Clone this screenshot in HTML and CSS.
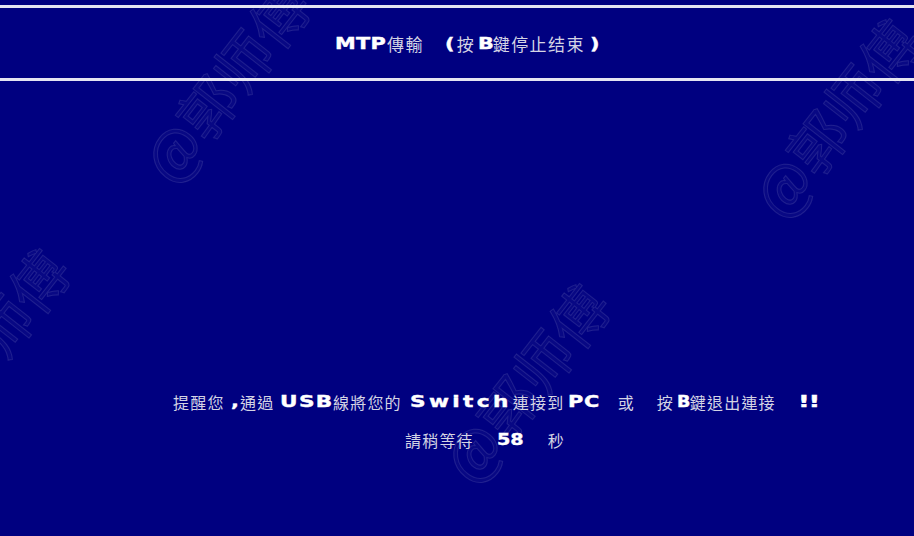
FILE: index.html
```html
<!DOCTYPE html>
<html lang="zh-Hant">
<head>
<meta charset="utf-8">
<title>MTP傳輸</title>
<link rel="stylesheet" href="styles.css">
</head>
<body>
<div class="screen">
  <header class="bar">
    <div class="title">
      <span class="en mtp">MTP</span><span class="cjk t1">傳輸</span><span class="en pl">(</span><span class="cjk t3">按</span><span class="en tb">B</span><span class="cjk t2">鍵停止结束</span><span class="en pr">)</span>
    </div>
  </header>
  <main class="body">
    <p class="line l1">
      <span class="cjk">提醒您</span><span class="en comma">,</span><span class="cjk tong">通過</span><span class="en usb">USB</span><span class="cjk">線將您的</span><span class="en sw">Switch</span><span class="cjk lian">連接到</span><span class="en pc">PC</span><span class="cjk or">或</span><span class="cjk press">按</span><span class="en lb">B</span><span class="cjk">鍵退出連接</span><span class="en bang">!!</span>
    </p>
    <p class="line l2">
      <span class="cjk">請稍等待</span><span class="en num">58</span><span class="cjk sec">秒</span>
    </p>
  </main>
  <div class="wm wm1">@郭师傅</div>
  <div class="wm wm2">@郭师傅</div>
  <div class="wm wm3">@郭师傅</div>
  <div class="wm wm4">@郭师傅</div>
</div>
</body>
</html>
```
FILE: styles.css
```css
html, body {
  margin: 0;
  padding: 0;
  background: #000080;
}
.screen {
  position: relative;
  width: 914px;
  height: 536px;
  overflow: hidden;
  background: #000080;
  font-family: "Noto Sans CJK TC", "Noto Sans CJK SC", sans-serif;
}
.bar {
  padding-top: 5px;
}
.title {
  height: 70px;
  border-top: 3px solid #e4e4f2;
  border-bottom: 3px solid #e4e4f2;
  display: flex;
  align-items: center;
  padding-left: 335px;
  font-size: 17px;
  white-space: pre;
}
.cjk {
  color: #d4d4e4;
  letter-spacing: 1.2px;
}
.title .cjk { letter-spacing: 1.4px; }
.en {
  display: inline-block;
  font-family: "DejaVu Sans", sans-serif;
  font-weight: bold;
  font-size: 16px;
  color: #ffffff;
  -webkit-text-stroke: 0.4px #ffffff;
  transform-origin: left center;
  transform: scaleX(1.3);
  white-space: pre;
}

/* title */
.mtp { width: 51px; letter-spacing: 0.2px; }
.t1 { margin-left: 1px; }
.pl { margin-left: 21px; width: 10px; }
.t3 { margin-left: 2px; }
.tb { margin-left: 2.6px; width: 15px; }
.pr { margin-left: 5px; width: 10px; }

/* body */
.body {
  padding-top: 311px;
  display: flex;
  flex-direction: column;
  gap: 18px;
}
.line {
  margin: 0;
  height: 20px;
  line-height: 20px;
  font-size: 16px;
  white-space: nowrap;
  display: flex;
  align-items: center;
}
.l1 { padding-left: 173px; }
.l2 { padding-left: 405px; }
.comma { margin-left: 6px; width: 9px; }
.tong { margin-left: 0.4px; }
.usb { margin-left: 5.6px; width: 53px; letter-spacing: 1px; transform: scaleX(1.35); }
.sw { margin-left: 8px; width: 102px; letter-spacing: 2.5px; transform: scaleX(1.35); }
.lian { margin-left: 1px; }
.pc { margin-left: 3.4px; width: 32px; letter-spacing: 0.5px; }
.or { margin-left: 18px; }
.press { margin-left: 21.8px; }
.lb { margin-left: 2.8px; width: 13px; transform: scaleX(1.1); }
.bang { margin-left: 22px; width: 18px; letter-spacing: -0.8px; transform: scaleX(1.6); }
.num { margin-left: 23px; width: 27px; transform: scaleX(1.2); }
.sec { margin-left: 24px; }

.wm {
  position: absolute;
  font-size: 58px;
  font-family: "Noto Sans CJK SC", sans-serif;
  color: rgba(255, 255, 255, 0.03);
  -webkit-text-stroke: 1px rgba(255, 255, 255, 0.11);
  transform: rotate(-52deg);
  white-space: nowrap;
  pointer-events: none;
}
.wm1 { left: 110px; top: 40px; }
.wm2 { left: 720px; top: 75px; }
.wm3 { left: -130px; top: 305px; }
.wm4 { left: 410px; top: 340px; }
```
